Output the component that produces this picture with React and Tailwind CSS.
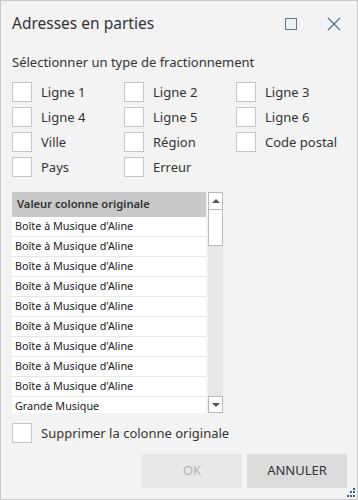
import React from "react";

const OPTIONS = [
  "Ligne 1", "Ligne 2", "Ligne 3",
  "Ligne 4", "Ligne 5", "Ligne 6",
  "Ville", "Région", "Code postal",
  "Pays", "Erreur",
];

const ROWS = [
  ...Array(9).fill("Boîte à Musique d'Aline"),
  "Grande Musique",
];

function Check({ label }) {
  return (
    <label className="flex h-[20px] items-center gap-[9px]">
      <span className="h-[20px] w-[20px] shrink-0 border border-[#c6c6c6] bg-white" />
      <span className="text-[13px] leading-none text-[#333]">{label}</span>
    </label>
  );
}

export default function App() {
  return (
    <div
      className="flex h-[500px] w-[358px] flex-col border border-[#c9c9c9] bg-[#f3f3f3] text-[#333]"
      style={{ fontFamily: '"Noto Sans", "Open Sans", sans-serif' }}
    >
      <div className="flex h-[44px] items-center pl-[11px] pr-[16px] pt-[2px]">
        <h1 className="flex-1 text-[15.5px] leading-none">Adresses en parties</h1>
        <button className="mr-[30px] h-[12px] w-[12px] border-[1.5px] border-[#557599]" />
        <svg width="14" height="14" viewBox="0 0 14 14">
          <path d="M1 1 13 13M13 1 1 13" stroke="#557599" strokeWidth="1.3" />
        </svg>
      </div>

      <div className="px-[11px] pt-[12px]">
        <p className="text-[13px] leading-none">Sélectionner un type de fractionnement</p>
        <div className="mt-[13px] grid grid-cols-[112px_112px_1fr] gap-y-[5px]">
          {OPTIONS.map((o) => (
            <Check key={o} label={o} />
          ))}
        </div>

        <div className="mt-[15px] flex h-[221px] w-[211px]">
          <div className="flex w-[194px] flex-col overflow-hidden">
            <div className="flex h-[25px] shrink-0 items-center bg-[#c8c8c8] pl-[5px] text-[11.2px] font-semibold">
              Valeur colonne originale
            </div>
            {ROWS.map((r, i) => (
              <div
                key={i}
                className="flex h-[20px] shrink-0 items-center border-b border-[#e6e6e6] bg-white pl-[3px] text-[10.8px] text-[#222]"
              >
                {r}
              </div>
            ))}
          </div>
          <div className="ml-[2px] flex w-[15px] flex-col bg-[#e8e8e8]">
            <div className="flex h-[18px] items-center justify-center border-[1.5px] border-[#b9b9b9] bg-white">
              <span className="h-0 w-0 border-x-[4px] border-b-[4px] border-x-transparent border-b-[#555]" />
            </div>
            <div className="h-[36px] border-x-[1.5px] border-b-[1.5px] border-[#b9b9b9] bg-white" />
            <div className="flex-1" />
            <div className="flex h-[17px] items-center justify-center border-[1.5px] border-[#b9b9b9] bg-white">
              <span className="h-0 w-0 border-x-[4px] border-t-[4px] border-x-transparent border-t-[#555]" />
            </div>
          </div>
        </div>

        <div className="mt-[10px]">
          <Check label="Supprimer la colonne originale" />
        </div>
      </div>

      <div className="mt-[11px] flex justify-end gap-[5px] pr-[10px]">
        <button className="h-[34px] w-[100px] bg-[#e8e8e8] text-[13px] text-[#b3b3b3]">OK</button>
        <button className="h-[34px] w-[100px] bg-[#dcdcdc] text-[13px] text-[#333]">ANNULER</button>
      </div>
      <div className="flex flex-1 items-end justify-end pb-[2px] pr-[2px]">
        <svg width="9" height="9" viewBox="0 0 9 9" fill="#3f5f86">
          <rect x="7" y="0" width="2" height="2" />
          <rect x="4" y="3" width="2" height="2" />
          <rect x="7" y="3" width="2" height="2" />
          <rect x="1" y="7" width="2" height="2" />
          <rect x="4" y="7" width="2" height="2" />
          <rect x="7" y="7" width="2" height="2" />
        </svg>
      </div>
    </div>
  );
}
